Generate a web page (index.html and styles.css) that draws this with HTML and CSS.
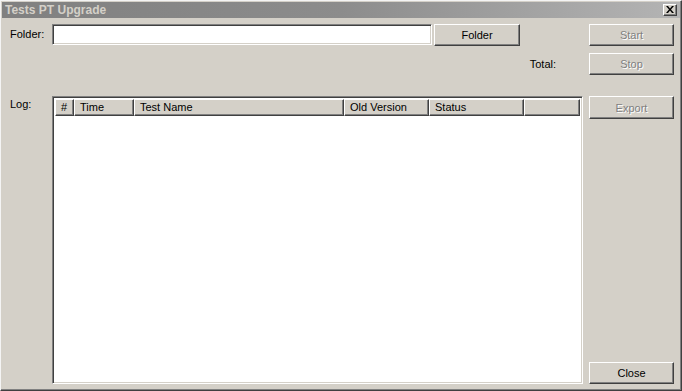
FILE: index.html
```html
<!DOCTYPE html>
<html>
<head>
<meta charset="utf-8">
<link rel="stylesheet" href="styles.css">
</head>
<body>
<div class="window">
  <div class="titlebar">
    <span class="title">Tests PT Upgrade</span>
    <span class="close-x"><svg width="8" height="7" viewBox="0 0 8 7"><path d="M0 0h2l2 2.5L6 0h2L5 3.5 8 7H6L4 4.5 2 7H0l3-3.5z" fill="#000"/></svg></span>
  </div>
  <div class="content">
    <div class="main">
      <div class="row row-folder">
        <span class="label">Folder:</span>
        <div class="input"></div>
        <button class="btn btn-folder">Folder</button>
      </div>
      <div class="row row-total">
        <span class="total">Total:</span>
      </div>
      <div class="row row-log">
        <span class="label">Log:</span>
        <div class="listview">
          <div class="header">
            <div class="col c-num">#</div>
            <div class="col c-time">Time</div>
            <div class="col c-name">Test Name</div>
            <div class="col c-old">Old Version</div>
            <div class="col c-status">Status</div>
            <div class="col c-rest"></div>
          </div>
        </div>
      </div>
    </div>
    <div class="side">
      <button class="btn disabled">Start</button>
      <button class="btn disabled btn-stop">Stop</button>
      <button class="btn disabled btn-export">Export</button>
      <div class="spacer"></div>
      <button class="btn btn-close">Close</button>
    </div>
  </div>
</div>
</body>
</html>
```
FILE: styles.css
```css
* { box-sizing: border-box; }
html, body { margin: 0; padding: 0; }
body {
  width: 682px;
  height: 391px;
  background: #d4d0c8;
  font-family: "Liberation Sans", Arial, sans-serif;
  font-size: 11px;
  color: #000;
  overflow: hidden;
}
.window {
  width: 682px;
  height: 391px;
  background: #d4d0c8;
  border: 1px solid;
  border-color: #f4f4f4 #404040 #404040 #f4f4f4;
  box-shadow: inset -1px -1px #808080;
  padding: 1px;
  display: flex;
  flex-direction: column;
}
.titlebar {
  height: 16px;
  background: linear-gradient(to right, #808080 0%, #8c8c8c 50%, #b4b4b4 100%);
  display: flex;
  align-items: center;
  padding: 0 3px 0 3px;
}
.title {
  flex: 1;
  font-weight: bold;
  font-size: 12px;
  color: #d4d0c8;
  line-height: 16px;
}
.close-x {
  width: 14px;
  height: 12px;
  background: #d4d0c8;
  border: 1px solid;
  border-color: #fff #404040 #404040 #fff;
  box-shadow: inset -1px -1px #808080;
  display: flex;
  align-items: center;
  justify-content: center;
  padding-bottom: 1px;
}
.close-x svg { display: block; }
.content {
  flex: 1;
  display: flex;
  padding: 6px 6px 6px 8px;
}
.main {
  width: 573px;
  display: flex;
  flex-direction: column;
}
.row { display: flex; }
.row-folder { height: 22px; align-items: flex-start; }
.label {
  width: 42px;
  flex: none;
  line-height: 14px;
  padding-top: 3px;
}
.input {
  width: 380px;
  height: 21px;
  background: #fff;
  border: 1px solid;
  border-color: #808080 #fff #fff #808080;
  box-shadow: inset 1px 1px #404040, inset -1px -1px #d4d0c8;
}
.btn {
  font-family: "Liberation Sans", Arial, sans-serif;
  font-size: 11px;
  color: #000;
  background: #d4d0c8;
  border: 1px solid;
  border-color: #fff #404040 #404040 #fff;
  box-shadow: inset -1px -1px #808080;
  height: 22px;
  width: 85px;
  padding: 0;
  margin: 0;
  text-align: center;
}
.btn-folder { width: 86px; margin-left: 2px; }
.btn.disabled {
  color: #808080;
  text-shadow: 1px 1px 0 #fff;
}
.row-total {
  margin-top: 7px;
  height: 22px;
  justify-content: flex-end;
  align-items: center;
  padding-right: 27px;
}
.row-log {
  margin-top: 21px;
  flex: 1;
  padding-bottom: 1px;
}
.row-log .label { padding-top: 1px; }
.listview {
  width: 531px;
  height: 288px;
  background: #fff;
  border: 1px solid;
  border-color: #808080 #fff #fff #808080;
  box-shadow: inset 1px 1px #404040, inset -1px -1px #d4d0c8;
  padding: 2px 2px 2px 2px;
}
.header {
  display: flex;
  height: 17px;
}
.col {
  height: 17px;
  background: #d4d0c8;
  border: 1px solid;
  border-color: #fff #404040 #404040 #fff;
  box-shadow: inset -1px -1px #808080;
  line-height: 14px;
  padding-left: 5px;
  white-space: nowrap;
  flex: none;
}
.c-num { width: 19px; }
.c-time { width: 60px; }
.c-name { width: 210px; }
.c-old { width: 85px; }
.c-status { width: 95px; }
.c-rest { flex: 1; }
.side {
  width: 85px;
  margin-left: 6px;
  display: flex;
  flex-direction: column;
}
.btn-stop { margin-top: 7px; }
.btn-export { margin-top: 21px; height: 23px; }
.spacer { flex: 1; }
.btn-close { margin-bottom: 1px; }
```
